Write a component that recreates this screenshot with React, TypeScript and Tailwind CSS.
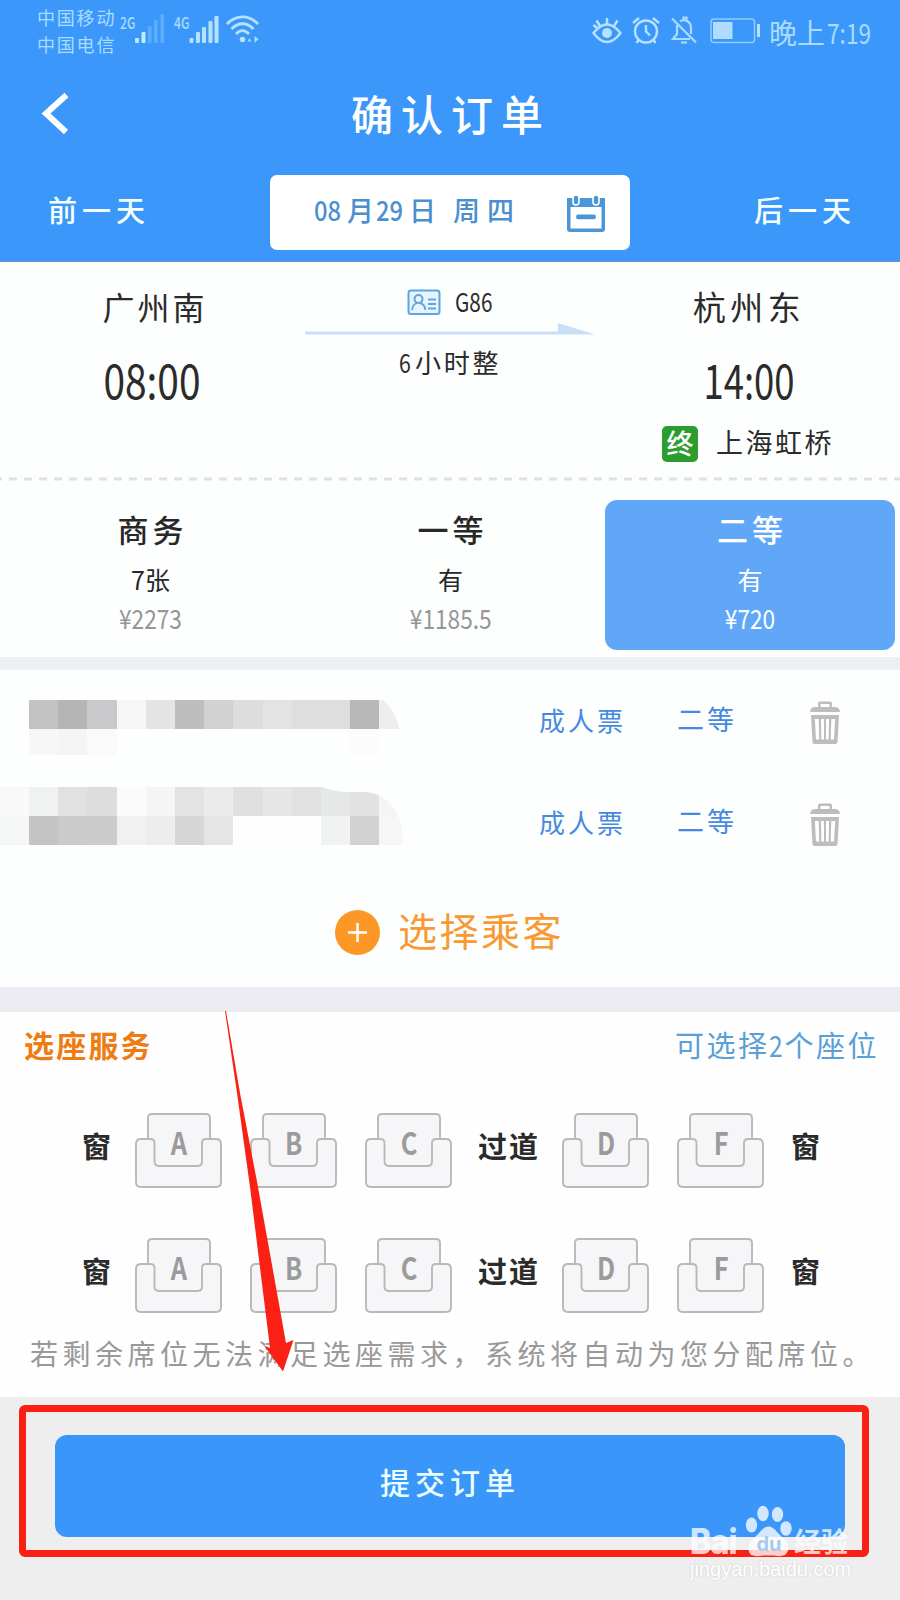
import type { ReactNode } from "react";

function StatusBar() {
  return (
    <div className="flex h-[62px] shrink-0 pt-[5px] text-[#a9dcff]">
      <div className="-mt-[1px] ml-[37px] w-[82px] whitespace-nowrap text-[18px] leading-[27px] tracking-[1.8px]">
        <div>中国移动</div>
        <div>中国电信</div>
      </div>
      <div className="w-[16px] pl-[1px] pt-[7px] text-[16px] font-medium leading-[20px]">
        <span className="inline-block origin-left scale-x-[.76]">2G</span>
      </div>
      <svg className="h-[50px] w-[32px]" viewBox="0 0 32 50" fill="#c0ebff">
        <rect x="0" y="33" width="4" height="5" rx="1" />
        <rect x="6.500" y="27" width="4" height="11" rx="1" />
        <g fill="#5eaefb">
          <rect x="13" y="21" width="3.500" height="17" rx="1" />
          <rect x="19" y="15" width="3.500" height="23" rx="1" />
          <rect x="25.500" y="9" width="3.500" height="29" rx="1" />
        </g>
      </svg>
      <div className="ml-[7px] w-[15px] pt-[7px] text-[16px] font-medium leading-[20px]">
        <span className="inline-block origin-left scale-x-[.76]">4G</span>
      </div>
      <svg className="h-[50px] w-[32px]" viewBox="0 0 32 50" fill="#b5e3ff">
        <rect x="0.500" y="33" width="4" height="5" rx="1" />
        <rect x="7" y="27" width="4" height="11" rx="1" />
        <rect x="13" y="22" width="4" height="16" rx="1" />
        <rect x="19.500" y="16" width="4" height="22" rx="1" />
        <rect x="25.500" y="11" width="4" height="27" rx="1" />
      </svg>
      <svg className="ml-[5px] h-[50px] w-[36px]" viewBox="0 0 36 50" fill="none" stroke="#b5e3ff" strokeWidth="2.800">
        <path d="M1 19 C10 9.500 23 9.500 32 19" />
        <path d="M5.500 24 C12 17 21 17 27.500 24" />
        <path d="M10 29 C14 24.500 19 24.500 23 29" />
        <circle cx="16.500" cy="34.500" r="2.800" fill="#b5e3ff" stroke="none" />
        <path d="M23.500 33 l-2 3.500 h4z M28.500 31 v7 l4 -4z" fill="#a9dcff" stroke="none" />
      </svg>
      <div className="ml-auto flex">
        <svg className="h-[50px] w-[30px]" viewBox="0 0 30 50" fill="none" stroke="#b5e3ff" strokeWidth="2.500">
          <path d="M1.500 28 Q15 11 28.500 28 Q15 46 1.500 28z" />
          <circle cx="15" cy="28" r="5" fill="#b5e3ff" stroke="none" />
          <path d="M15 19 V13 M8 21 L4.500 15.500 M1.500 20 L5 23 M22 21 L25.500 15.500" />
        </svg>
        <svg className="ml-[9px] h-[50px] w-[30px]" viewBox="0 0 30 50" fill="none" stroke="#b5e3ff" strokeWidth="2.400">
          <circle cx="15" cy="26.500" r="11" />
          <path d="M15 20 V26.500 L19 30.500 M2 18 L8 13 M28 18 L22 13 M7.500 35 l-2 3 M22.500 35 l2 3" />
        </svg>
        <svg className="ml-[8px] h-[50px] w-[30px]" viewBox="0 0 30 50" fill="none" stroke="#a9dcff" strokeWidth="2.200">
          <path d="M8 20 V29 L4 34 H21 M11 16.500 Q14 14 18 16 Q22 18 22 23 V29 M3 13.500 L27 37.500 M12 37.500 h6 M14.500 15 v-2.500 h3 V15" />
        </svg>
        <svg className="ml-[11px] h-[50px] w-[52px]" viewBox="0 0 52 50" fill="none" stroke="#8fcbff">
          <rect x="1" y="14" width="43.500" height="23.500" rx="3" strokeWidth="1.500" />
          <rect x="3" y="17" width="19.500" height="17" fill="#b0dcff" stroke="none" />
          <path d="M48.500 19 V32" stroke="#b5e3ff" strokeWidth="3" />
        </svg>
        <div className="-mt-[4px] ml-[7px] flex w-[131px] items-center whitespace-nowrap text-[28px] leading-[54px]">
          <span>晚上</span>
          <span className="ml-[2px] inline-block origin-left scale-x-[.81]">7:19</span>
        </div>
      </div>
    </div>
  );
}

function CalendarIcon() {
  return (
    <svg className="h-[40px] w-[40px]" viewBox="0 0 40 40">
      <path d="M1 4 H39 V35 Q39 38 36 38 H4 Q1 38 1 35z" fill="#4a96d6" />
      <rect x="4.500" y="13" width="31" height="21.500" fill="#fff" />
      <rect x="7" y="1" width="6" height="10" rx="3" fill="#4a96d6" stroke="#fff" strokeWidth="1.600" />
      <rect x="27" y="1" width="6" height="10" rx="3" fill="#4a96d6" stroke="#fff" strokeWidth="1.600" />
      <rect x="10" y="20.500" width="20" height="4.800" rx="2.400" fill="#4a96d6" />
    </svg>
  );
}

function Header() {
  return (
    <header className="flex h-[262px] shrink-0 flex-col border-b-2 border-[#5297dc] bg-[#3b98fa]">
      <StatusBar />
      <div className="flex h-[102px] shrink-0 items-center">
        <svg className="ml-[40px] h-[44px] w-[30px]" viewBox="0 0 30 44" fill="none" stroke="#fff" strokeWidth="6">
          <path d="M26.500 4 L6 22.500 L26 41" />
        </svg>
        <h1 className="ml-[281px] whitespace-nowrap text-[42px] font-medium leading-[50px] tracking-[8px] text-white">确认订单</h1>
      </div>
      <div className="mt-[11px] flex h-[75px] shrink-0 items-center justify-between pl-[48px] pr-[46px] text-[29px] font-medium tracking-[5px] text-[#f4ffff]">
        <span className="w-[106px] whitespace-nowrap pb-[6px]">前一天</span>
        <div className="-ml-[8px] flex h-[75px] w-[360px] items-center rounded-[7px] bg-white text-[27px] text-[#4a90cf]">
          <div className="ml-[44px] flex w-[230px] items-center whitespace-nowrap pb-[5px] tracking-normal">
            <span className="w-[33px]"><span className="inline-block origin-left scale-x-[.88]">08</span></span>
            <span className="w-[29px]">月</span>
            <span className="w-[33px]"><span className="inline-block origin-left scale-x-[.88]">29</span></span>
            <span className="w-[44px]">日</span>
            <span className="tracking-[7px]">周四</span>
          </div>
          <div className="ml-[22px] pt-[2px]">
            <CalendarIcon />
          </div>
        </div>
        <span className="w-[100px] whitespace-nowrap pb-[6px]">后一天</span>
      </div>
    </header>
  );
}

function Clock({ children }: { children: ReactNode }) {
  return (
    <div className="flex h-[64px] items-center justify-center text-[48px] leading-[64px]">
      {children}
    </div>
  );
}

function Route() {
  return (
    <section className="flex h-[218px] shrink-0 bg-[#fdfefe] pt-[22px] text-[#2b2b2b]">
      <div className="w-[304px]">
        <div className="flex h-[44px] items-center justify-center pl-[6px] text-[32px] tracking-[3px]">广州南</div>
        <div className="mt-[18px]">
          <Clock><span className="inline-block scale-x-[.81]">08:00</span></Clock>
        </div>
      </div>
      <div className="flex w-[292px] flex-col">
        <div className="flex h-[36px] items-center pl-[103px]">
          <svg className="h-[27px] w-[35px]" viewBox="0 0 35 27" fill="none" stroke="#5ea5df" strokeWidth="2">
            <rect x="1.500" y="1.500" width="31" height="23.500" rx="2.500" fill="#e7f4fd" />
            <circle cx="11.500" cy="10" r="4" />
            <path d="M5 21 Q6 15 10 14 M13 14 Q17.500 15 18.500 21 M21 10.500 H29 M21 15 H29 M21 19.500 H29" strokeWidth="1.800" />
          </svg>
          <span className="-mt-[3px] ml-[13px] inline-block origin-left scale-x-[.8] text-[26px] leading-[36px]">G86</span>
        </div>
        <svg className="mt-[2px] h-[14px] w-[292px]" viewBox="0 0 292 14">
          <path d="M1 9.500 H254 V1 L291 12.500 H1z" fill="#c9dff7" />
        </svg>
        <div className="flex h-[50px] items-center whitespace-nowrap pl-[95px] text-[26px]">
          <span className="w-[16px]"><span className="inline-block origin-left scale-x-[.82]">6</span></span>
          <span className="tracking-[2.8px]">小时整</span>
        </div>
      </div>
      <div className="w-[304px]">
        <div className="flex h-[44px] items-center justify-center pl-[2px] pt-[2px] text-[33px] tracking-[4.5px]">杭州东</div>
        <div className="mt-[18px]">
          <Clock><span className="ml-[2px] inline-block scale-x-[.76]">14:00</span></Clock>
        </div>
        <div className="mt-[12px] flex h-[44px] items-center pl-[66px]">
          <span className="flex h-[36px] w-[36px] items-center justify-center rounded-[5px] bg-[#2c9c2f] pb-[2px] text-[27px] font-medium text-white">终</span>
          <span className="-mt-[3px] ml-[18px] whitespace-nowrap text-[27px] tracking-[2.5px]">上海虹桥</span>
        </div>
      </div>
    </section>
  );
}

const classes = [
  { name: "商务", left: "7张", price: "¥2273", on: false },
  { name: "一等", left: "有", price: "¥1185.5", on: false },
  { name: "二等", left: "有", price: "¥720", on: true },
];

function SeatClasses() {
  return (
    <section className="h-[177px] shrink-0 bg-[#fdfefe]">
      <svg className="-mt-[3px] block h-[4px] w-full" viewBox="0 0 900 4">
        <path d="M-6 2 H900" stroke="#e0e0e0" strokeWidth="3" strokeDasharray="8 7" />
      </svg>
      <div className="mt-[19px] flex gap-[9px] pl-[5px]">
        {classes.map((c) => (
          <div
            key={c.name}
            className={
              c.on
                ? "flex h-[150px] w-[290px] flex-col items-center rounded-[12px] bg-[#60a8f7] text-white"
                : "flex h-[150px] w-[291px] flex-col items-center text-[#282828]"
            }
          >
            <div className="h-[59px] pl-[4px] text-[31px] font-medium leading-[58px] tracking-[4px]">{c.name}</div>
            <div className="h-[40px] text-[25px] leading-[40px]">
              <span className={c.left.length > 1 ? "inline-block" : "inline-block"}>{c.left}</span>
            </div>
            <div className={c.on ? "h-[38px] text-[27px] leading-[38px]" : "h-[38px] text-[27px] leading-[38px] text-[#969696]"}>
              <span className="inline-block scale-x-[.84]">{c.price}</span>
            </div>
          </div>
        ))}
      </div>
    </section>
  );
}

function Mosaic({ rows }: { rows: string[][] }) {
  return (
    <div className="flex w-[404px] flex-col">
      {rows.map((r, i) => (
        <div key={i} className="flex h-[29px]">
          {r.map((c, j) => (
            <div
              key={j}
              className={j === r.length - 1 ? "w-[24px]" : j === 0 ? "w-[29px]" : "w-[29.2px]"}
              style={{ backgroundColor: c }}
            />
          ))}
        </div>
      ))}
    </div>
  );
}

function TrashIcon() {
  return (
    <svg className="h-[44px] w-[32px]" viewBox="0 0 32 44" fill="#bdbdbd">
      <path d="M9 6 V2.500 Q9 0.500 11 0.500 H21 Q23 0.500 23 2.500 V6 H26 Q30.500 6 31 11 H1 Q1.500 6 6 6z M11.500 6 H20.500 V3 H11.500z" fillRule="evenodd" />
      <path d="M2 14 H30 L28.500 41 Q28.300 43 26.500 43 H5.500 Q3.700 43 3.500 41z M5.800 18 L7 38.500 H10.300 L9.700 18z M12 18 L12.300 38.500 H15 V18z M17 18 V38.500 H19.700 L20 18z M22.300 18 L21.700 38.500 H25 L26.200 18z" fillRule="evenodd" />
    </svg>
  );
}

function Passenger({ children }: { children: ReactNode }) {
  return (
    <div className="flex h-[102px] shrink-0 items-center">
      {children}
      <div className="ml-[135px] w-[138px] whitespace-nowrap pb-[4px] text-[26px] tracking-[3px] text-[#4689e0]">成人票</div>
      <div className="w-[132px] whitespace-nowrap pb-[4px] text-[27px] tracking-[3px] text-[#4689e0]">二等</div>
      <div className="pt-[3px]">
        <TrashIcon />
      </div>
    </div>
  );
}

const W = "#fdfefe";
const first = [
  [W, "#c3c3c3", "#b5b5b5", "#c9c9cb", "#f6f6f6", "#e4e4e4", "#bebebe", "#d2d2d2", "#dddddd", "#e3e3e3", "#dedede", "#dedede", "#b8b8b8", "#eeeeee"],
  [W, "#f7f7f7", "#f5f5f5", "#fafafa", W, W, W, W, W, W, W, W, "#fcfcfc", W],
];
const second = [
  ["#f9f9f9", "#f0f2f1", "#e1e1e1", "#dddddd", "#fbfbfb", "#f5f5f5", "#e3e3e3", "#ebebeb", "#e0e0e0", "#e6e6e6", "#e1e1e1", "#e6e8e7", "#e2e2e2", "#f5f5f5"],
  ["#f5f6f6", "#c4c4c4", "#cbcbcb", "#cccccc", "#f1f1f1", "#ededed", "#d6d6d6", "#e5e5e5", "#fdfdfd", "#fdfdfd", "#fdfdfd", "#f1f3f2", "#d2d2d2", "#f6f6f6"],
];

function Passengers() {
  return (
    <section className="flex h-[355px] shrink-0 flex-col border-t-[13px] border-[#eeeff2] bg-[#fdfefe]">
      <Passenger>
        <div className="self-start pt-[30px]">
          <div className="[clip-path:path('M0_0H383Q396_10_399_29V55H0Z')]">
            <Mosaic rows={first} />
          </div>
        </div>
      </Passenger>
      <Passenger>
        <div className="self-start pt-[15px]">
          <div className="[clip-path:path('M0_0H322Q334_5_350_5H365C392_6_406_34_402_58H0Z')]">
            <Mosaic rows={second} />
          </div>
        </div>
      </Passenger>
      <div className="flex h-[113px] items-center pl-[335px] pt-[4px]">
        <svg className="h-[45px] w-[45px]" viewBox="0 0 45 45">
          <circle cx="22.500" cy="22.500" r="22.500" fill="#fd9827" />
          <path d="M22.500 13 V32 M13 22.500 H32" stroke="#fff" strokeWidth="2.500" />
        </svg>
        <span className="-mt-[8px] ml-[18px] whitespace-nowrap text-[39px] leading-[50px] tracking-[2.5px] text-[#f79a33]">选择乘客</span>
      </div>
      <div className="h-[25px] bg-[#ecebf1]" />
    </section>
  );
}

function Seat({ letter }: { letter: string }) {
  return (
    <div className="relative h-[76px] w-[88px]">
      <svg className="block h-[76px] w-[88px]" viewBox="0 0 88 76" fill="#f6f6f8" stroke="#b9b9b9" strokeWidth="1.900">
        <path d="M13 28 V6 Q13 2 17 2 H71 Q75 2 75 6 V28 V54 H13z" stroke="none" />
        <path d="M13 27 V6 Q13 2 17 2 H71 Q75 2 75 6 V27" />
        <path d="M6 27 H15 Q19.500 27 19.500 31 V49 Q19.500 54 24 54 H62 Q67 54 67 50 V31 Q67 27 71 27 H81 Q86 27 86 32 V70 Q86 75 81 75 H6 Q1 75 1 70 V32 Q1 27 6 27z" />
      </svg>
      <span className="absolute inset-x-0 top-[11px] text-center text-[31px] font-bold leading-[38px] text-[#9b9b9b]">
        <span className="inline-block scale-x-[.82]">{letter}</span>
      </span>
    </div>
  );
}

function SeatRow() {
  return (
    <div className="flex h-[125px] items-start whitespace-nowrap text-[29px] font-bold leading-[66px] text-[#2b2b2b]">
      <span className="ml-[82px] w-[53px]">窗</span>
      <div className="flex gap-[27px]">
        <Seat letter="A" />
        <Seat letter="B" />
        <Seat letter="C" />
      </div>
      <span className="ml-[25px] w-[84px] tracking-[2px]">过道</span>
      <div className="flex gap-[27px]">
        <Seat letter="D" />
        <Seat letter="F" />
      </div>
      <span className="ml-[26px]">窗</span>
    </div>
  );
}

function SeatService() {
  return (
    <section className="h-[385px] shrink-0 bg-[#fefefe]">
      <div className="flex h-[100px] justify-between pl-[24px] pr-[21px] leading-[65px]">
        <span className="text-[30px] font-bold tracking-[2.2px] text-[#ef7c13]">选座服务</span>
        <span className="flex whitespace-nowrap text-[29px] tracking-[2.5px] text-[#5a9fd6]">
          可选择<span className="w-[15px]"><span className="inline-block origin-left scale-x-[.85]">2</span></span>个座位
        </span>
      </div>
      <SeatRow />
      <SeatRow />
      <p className="-mt-[30px] whitespace-nowrap pl-[30px] text-[28px] leading-[42px] tracking-[4.5px] text-[#999999]">
        若剩余席位无法满足选座需求，系统将自动为您分配席位。
      </p>
    </section>
  );
}

function Watermark() {
  return (
    <div className="absolute left-[690px] top-[1502px] w-[165px] whitespace-nowrap text-white/75">
      <div className="flex h-[56px] items-end">
        <span className="w-[55px] font-[Inter] text-[35px] font-extrabold leading-[34px] tracking-[-1px]">
          <span className="inline-block origin-left scale-x-[.92]">Bai</span>
        </span>
        <svg className="h-[54px] w-[47px]" viewBox="0 0 47 54" fill="#fff" fillOpacity="0.78">
          <ellipse cx="6.500" cy="21" rx="5.700" ry="7.500" />
          <ellipse cx="18" cy="9.500" rx="5.700" ry="7.800" />
          <ellipse cx="32.500" cy="10.500" rx="5.700" ry="7.500" />
          <ellipse cx="41" cy="24.500" rx="5.700" ry="7.300" />
          <path d="M23.500 22.500 Q28 22.500 32 28 L41 37 Q46 46 40 51 Q35 53 29 51.500 H18 Q11 53 6 51 Q1 46 6 37 L15 28 Q19 22.500 23.500 22.500z" />
          <text x="24" y="47" textAnchor="middle" fontFamily="Inter, sans-serif" fontSize="20" fontWeight="700" fill="#9cc4ee" fillOpacity="0.9">du</text>
        </svg>
        <span className="ml-[2px] text-[27px] font-bold leading-[34px]">经验</span>
      </div>
      <div className="-mt-[2px] h-[26px] font-['Liberation_Sans'] text-[20px] leading-[26px] text-white">
        <span className="inline-block origin-left [text-shadow:0_0_2px_#c9c9c9]">jingyan.baidu.com</span>
      </div>
    </div>
  );
}

export default function App() {
  return (
    <main className="relative flex h-[1600px] w-[900px] flex-col overflow-hidden bg-[#eeeeef] font-['Noto_Sans_CJK_SC',sans-serif]">
      <Header />
      <Route />
      <SeatClasses />
      <Passengers />
      <SeatService />
      <footer className="h-[203px] px-[19px] pt-[8px]">
        <div className="h-[152px] w-[850px] rounded-[6px] border-[7px] border-[#fa2014] px-[29px] pt-[23px]">
          <button className="block h-[102px] w-[790px] rounded-[12px] bg-[#3a97f9] pb-[9px] text-[30px] font-medium tracking-[5px] text-[#e9ffff]">提交订单</button>
        </div>
      </footer>
      <svg className="absolute left-[220px] top-[1008px] h-[366px] w-[80px]" viewBox="0 0 80 366">
        <path d="M5 3 L6 3 L20 85 L38 179 L66 335 L73.500 332 L63 363.500 L44 337.500 L50 340 L30 179 L17 85z" fill="#fa2014" />
      </svg>
      <Watermark />
    </main>
  );
}
